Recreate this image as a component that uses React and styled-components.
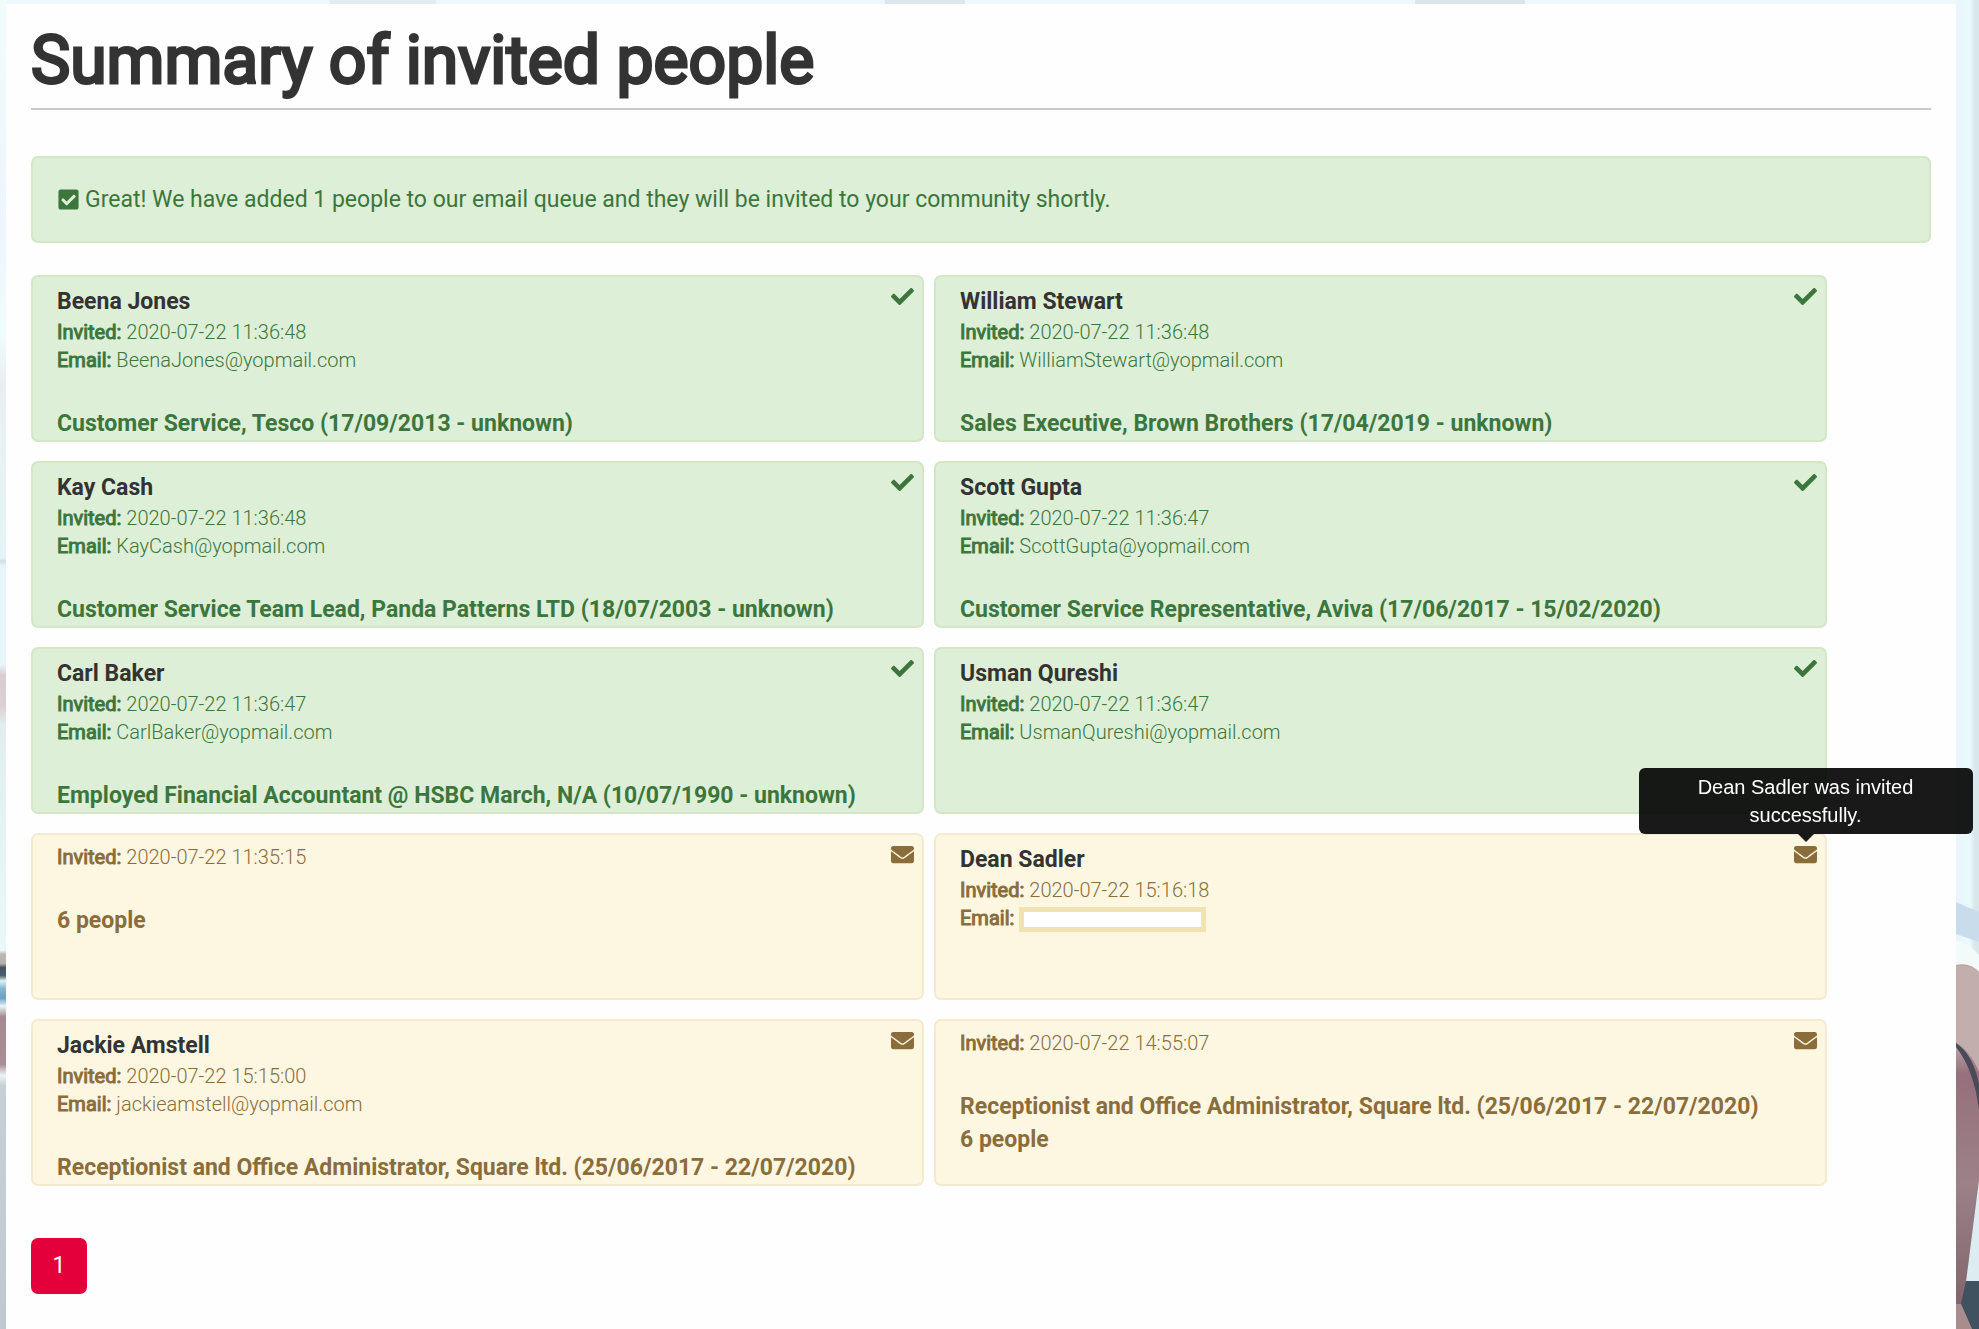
import React from "react";
import styled, { createGlobalStyle } from "styled-components";
import { FaCheck, FaEnvelope, FaCheckSquare } from "react-icons/fa";

const GlobalStyle = createGlobalStyle`
  * { box-sizing: border-box; }
  body {
    margin: 0;
    background: #ecf8fc;
    font-family: Roboto, "Liberation Sans", sans-serif;
    font-weight: 400;
    color: #333;
  }
  h1, h2, p { margin: 0; }
`;

const tones = {
  success: { text: "#3c763d", fill: "#ddefd6", edge: "#d3e6c6" },
  pending: { text: "#8a6d3b", fill: "#fdf7e2", edge: "#f4ebcf" },
};

const Backdrop = styled.svg`
  position: fixed;
  inset: 0;
  width: 100%;
  height: 100%;
  z-index: -1;
`;

const Panel = styled.main`
  margin: 4px 23px 0 6px;
  padding: 16px 25px 35px;
  min-height: calc(100vh - 4px);
  background: #fefefe;
`;

const Title = styled.h1`
  padding-bottom: 6px;
  border-bottom: 2px solid #c8c8c8;
  font-size: 66px;
  line-height: 82px;
  font-weight: 400;
  -webkit-text-stroke: 3px currentColor;
`;

const Alert = styled.div`
  display: flex;
  align-items: center;
  gap: 5px;
  margin: 46px 0 32px;
  padding: 25px 24px;
  border: 2px solid ${tones.success.edge};
  border-radius: 7px;
  background: ${tones.success.fill};
  color: ${tones.success.text};
  font-size: 23px;
  line-height: 33px;
`;

const Grid = styled.ul`
  display: grid;
  grid-template-columns: 47% 47%;
  gap: 19px 10px;
  margin: 0;
  padding: 0;
  list-style: none;
`;

const Card = styled.li`
  display: flex;
  justify-content: space-between;
  align-items: flex-start;
  min-height: 167px;
  padding: 8px 8px 0 24px;
  border: 2px solid ${(p) => tones[p.$tone].edge};
  border-radius: 7px;
  background: ${(p) => tones[p.$tone].fill};
  color: ${(p) => tones[p.$tone].text};
`;

const Name = styled.h2`
  color: #333;
  font-size: 23px;
  line-height: 33px;
  font-weight: 700;
`;

const Line = styled.p`
  display: flex;
  align-items: flex-end;
  gap: 5px;
  height: 28px;
  font-size: 20px;
  line-height: 28px;
  font-weight: 300;
`;

const Label = styled.b`
  font-weight: 400;
  -webkit-text-stroke: 1px currentColor;
`;

const Hidden = styled.span`
  width: 187px;
  height: 25px;
  border: 5px solid #efe3b1;
  background: #fff;
`;

const Roles = styled.div`
  margin-top: 33px;
  font-size: 23px;
  line-height: 33px;
  font-weight: 700;
`;

const Status = styled.span`
  position: relative;
  display: flex;
  font-size: 23px;
`;

const Tooltip = styled.span`
  position: absolute;
  bottom: 100%;
  left: 50%;
  width: 334px;
  margin: 0 0 9px -167px;
  padding: 5px 50px;
  border-radius: 6px;
  background: rgba(0, 0, 0, 0.9);
  color: #fff;
  font: 400 20px/28px "Liberation Sans", Arial, sans-serif;
  text-align: center;

  &::after {
    content: "";
    position: absolute;
    top: 100%;
    left: 50%;
    margin-left: -8px;
    border: 8px solid transparent;
    border-top-color: rgba(0, 0, 0, 0.9);
    border-bottom-width: 0;
  }
`;

const Pager = styled.nav`
  margin-top: 52px;
`;

const PageButton = styled.button`
  width: 56px;
  height: 56px;
  padding: 0 0 2px;
  border: 0;
  border-radius: 7px;
  background: #e4003a;
  color: #fff;
  font: inherit;
  font-size: 23px;
`;

const people = [
  { tone: "success", name: "Beena Jones", invited: "2020-07-22 11:36:48", email: "BeenaJones@yopmail.com", roles: ["Customer Service, Tesco (17/09/2013 - unknown)"] },
  { tone: "success", name: "William Stewart", invited: "2020-07-22 11:36:48", email: "WilliamStewart@yopmail.com", roles: ["Sales Executive, Brown Brothers (17/04/2019 - unknown)"] },
  { tone: "success", name: "Kay Cash", invited: "2020-07-22 11:36:48", email: "KayCash@yopmail.com", roles: ["Customer Service Team Lead, Panda Patterns LTD (18/07/2003 - unknown)"] },
  { tone: "success", name: "Scott Gupta", invited: "2020-07-22 11:36:47", email: "ScottGupta@yopmail.com", roles: ["Customer Service Representative, Aviva (17/06/2017 - 15/02/2020)"] },
  { tone: "success", name: "Carl Baker", invited: "2020-07-22 11:36:47", email: "CarlBaker@yopmail.com", roles: ["Employed Financial Accountant @ HSBC March, N/A (10/07/1990 - unknown)"] },
  { tone: "success", name: "Usman Qureshi", invited: "2020-07-22 11:36:47", email: "UsmanQureshi@yopmail.com", roles: [] },
  { tone: "pending", invited: "2020-07-22 11:35:15", roles: ["6 people"] },
  { tone: "pending", name: "Dean Sadler", invited: "2020-07-22 15:16:18", hidden: true, roles: [], tip: "Dean Sadler was invited successfully." },
  { tone: "pending", name: "Jackie Amstell", invited: "2020-07-22 15:15:00", email: "jackieamstell@yopmail.com", roles: ["Receptionist and Office Administrator, Square ltd. (25/06/2017 - 22/07/2020)"] },
  { tone: "pending", invited: "2020-07-22 14:55:07", roles: ["Receptionist and Office Administrator, Square ltd. (25/06/2017 - 22/07/2020)", "6 people"] },
];

function PersonCard({ person }) {
  const { tone, name, invited, email, hidden, roles, tip } = person;
  return (
    <Card $tone={tone}>
      <div>
        {name && <Name>{name}</Name>}
        <Line><Label>Invited:</Label> <span>{invited}</span></Line>
        {(email || hidden) && (
          <Line><Label>Email:</Label> {hidden ? <Hidden /> : <span>{email}</span>}</Line>
        )}
        {roles.length > 0 && (
          <Roles>{roles.map((role) => <p key={role}>{role}</p>)}</Roles>
        )}
      </div>
      <Status>
        {tone === "success" ? <FaCheck /> : <FaEnvelope />}
        {tip && <Tooltip role="tooltip">{tip}</Tooltip>}
      </Status>
    </Card>
  );
}

function Photo() {
  return (
    <Backdrop viewBox="0 0 1979 1329" preserveAspectRatio="none" aria-hidden="true">
      <defs>
        <linearGradient id="sky" x1="0" x2="1" y1="0" y2="0">
          <stop offset="0" stopColor="#eaf5fc" />
          <stop offset="0.6" stopColor="#eafafb" />
          <stop offset="0.8" stopColor="#d8e8ec" />
          <stop offset="1" stopColor="#d8e6ea" />
        </linearGradient>
        <linearGradient id="skin" x1="0" x2="0" y1="0" y2="1">
          <stop offset="0" stopColor="#b9a4a4" />
          <stop offset="0.2" stopColor="#c4b3b3" />
          <stop offset="0.3" stopColor="#96707c" />
          <stop offset="0.6" stopColor="#9c8188" />
          <stop offset="1" stopColor="#7c6066" />
        </linearGradient>
        <linearGradient id="left" x1="0" x2="0" y1="0" y2="1">
          <stop offset="0" stopColor="#f0fcfc" />
          <stop offset="0.17" stopColor="#eef5fd" />
          <stop offset="0.25" stopColor="#effcfd" />
          <stop offset="0.29" stopColor="#e9eff1" />
          <stop offset="0.42" stopColor="#e4f4f6" />
          <stop offset="0.422" stopColor="#d0dfe1" />
          <stop offset="0.426" stopColor="#e6f6fa" />
          <stop offset="0.5" stopColor="#e6f6fa" />
          <stop offset="0.508" stopColor="#d9cdd1" />
          <stop offset="0.53" stopColor="#dccfd2" />
          <stop offset="0.545" stopColor="#e2eeee" />
          <stop offset="0.715" stopColor="#e9f8f8" />
          <stop offset="0.718" stopColor="#bdb8b4" />
          <stop offset="0.725" stopColor="#b5b0ae" />
          <stop offset="0.728" stopColor="#44545f" />
          <stop offset="0.734" stopColor="#4c5f6c" />
          <stop offset="0.738" stopColor="#e0f2f6" />
          <stop offset="0.744" stopColor="#84b4ce" />
          <stop offset="0.751" stopColor="#6fa0be" />
          <stop offset="0.757" stopColor="#eaf6f8" />
          <stop offset="0.765" stopColor="#a48a90" />
          <stop offset="0.801" stopColor="#a98e93" />
          <stop offset="0.809" stopColor="#ecf4f6" />
          <stop offset="0.817" stopColor="#c6d0d6" />
          <stop offset="1" stopColor="#bfc9cf" />
        </linearGradient>
      </defs>
      <rect width="1979" height="1329" fill="#ecf8fc" />
      <rect width="6" height="1329" fill="url(#left)" />
      <rect x="330" width="106" height="4" fill="#e2ebef" />
      <rect x="885" width="80" height="4" fill="#dbe7ec" />
      <rect x="1415" width="110" height="4" fill="#dae6ea" />
      <rect x="1956" width="23" height="1329" fill="url(#sky)" />
      <path d="M1956 902 L1979 912 V942 L1956 934 Z" fill="#c9dcec" />
      <path d="M1956 940 Q1970 944 1979 955 V972 L1956 962 Z" fill="#f3fafa" />
      <path d="M1956 965 Q1970 962 1979 972 V1329 H1956 Z" fill="url(#skin)" />
      <path d="M1956 966 Q1970 964 1979 972 V1072 Q1970 1050 1956 1042 Z" fill="#c2aeac" />
      <path d="M1956 1043 Q1973 1054 1979 1084 V1110 Q1974 1070 1956 1047 Z" fill="#4b4b58" />
      <path d="M1979 1180 V1282 H1966 Z" fill="#dcecf0" />
      <path d="M1966 1281 H1979 V1329 H1972 L1961 1304 Z" fill="#405260" />
      <path d="M1956 1304 L1961 1304 L1972 1329 H1956 Z" fill="#a98d8c" />
    </Backdrop>
  );
}

export default function App() {
  return (
    <>
      <GlobalStyle />
      <Photo />
      <Panel>
        <Title>Summary of invited people</Title>
        <Alert role="status">
          <FaCheckSquare />
          <span>Great! We have added 1 people to our email queue and they will be invited to your community shortly.</span>
        </Alert>
        <Grid>
          {people.map((person) => (
            <PersonCard key={person.invited + (person.name || "")} person={person} />
          ))}
        </Grid>
        <Pager aria-label="Pages">
          <PageButton type="button" aria-current="page">1</PageButton>
        </Pager>
      </Panel>
    </>
  );
}
